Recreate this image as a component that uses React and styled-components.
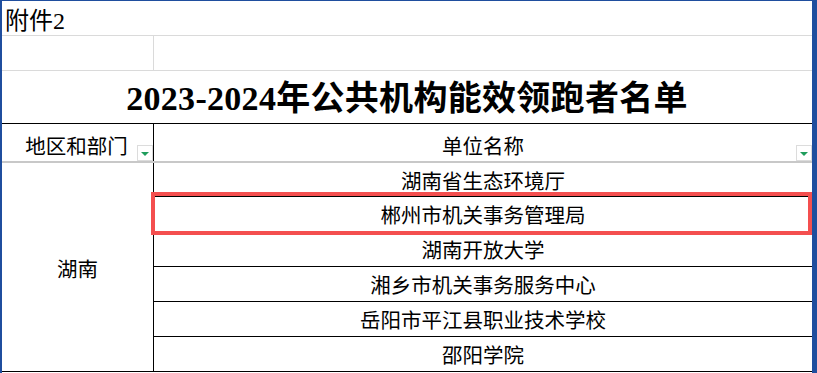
import React from 'react'
import styled, { createGlobalStyle } from 'styled-components'

const GlobalStyle = createGlobalStyle`
  html, body { margin: 0; padding: 0; background: #fff; }
  body { font-family: "Liberation Serif", "Noto Sans CJK SC", serif; color: #000; }
`

const Frame = styled.div`
  width: 817px;
  height: 373px;
  box-sizing: border-box;
  border-top: 1px solid #1f4e9e;
  border-left: 2px solid #1f4e9e;
  border-right: 5px solid #1f4e9e;
  overflow: hidden;
  font-size: 20.5px;
`

const Row = styled.div`
  display: flex;
  height: ${p => p.$h}px;
  box-sizing: border-box;
  border-bottom: ${p => p.$line || '1px solid #dadada'};
`

const Cell = styled.div`
  position: relative;
  display: flex;
  align-items: center;
  justify-content: ${p => p.$align || 'center'};
  box-sizing: border-box;
  width: ${p => (p.$w ? p.$w + 'px' : 'auto')};
  flex: ${p => (p.$w ? 'none' : '1')};
  border-right: ${p => p.$divider || 'none'};
  padding: ${p => p.$pad || '0'};
  font-size: ${p => p.$size || 'inherit'};
  white-space: nowrap;
`

const Title = styled.div`
  flex: 1;
  display: flex;
  align-items: center;
  justify-content: center;
  font-size: 34px;
  font-weight: bold;
  letter-spacing: 0.3px;
  padding-bottom: 3px;
`

const FilterButton = styled.span`
  position: absolute;
  right: 0;
  bottom: 0;
  width: 16px;
  height: 16px;
  box-sizing: border-box;
  border: 1px solid #dcdcdc;
  background: #fff;
  display: flex;
  align-items: center;
  justify-content: center;
  &::after {
    content: '';
    border-left: 4px solid transparent;
    border-right: 4px solid transparent;
    border-top: 4px solid #1f9d5c;
    margin-top: 1px;
  }
`

const DataBlock = styled.div`
  display: grid;
  grid-template-columns: 152px 1fr;
  grid-template-rows: 34px repeat(5, 35px);
`

const Region = styled.div`
  grid-row: 1 / span 6;
  display: flex;
  align-items: center;
  justify-content: center;
  border-right: 1px solid #000;
  border-bottom: 1px solid #000;
  padding-top: 1px;
`

const Unit = styled.div`
  position: relative;
  display: flex;
  align-items: center;
  justify-content: center;
  box-sizing: border-box;
  border-bottom: 1px solid #000;
`

const Selection = styled.div`
  position: absolute;
  top: -5px;
  bottom: -4px;
  left: -3px;
  right: 0;
  border: 4px solid #f44f4f;
  pointer-events: none;
`

const units = [
  '湖南省生态环境厅',
  '郴州市机关事务管理局',
  '湖南开放大学',
  '湘乡市机关事务服务中心',
  '岳阳市平江县职业技术学校',
  '邵阳学院',
]

export default function App() {
  return (
    <>
      <GlobalStyle />
      <Frame>
        <Row $h={35}>
          <Cell $align="flex-start" $pad="1px 0 0 3px" $size="24px">附件2</Cell>
        </Row>
        <Row $h={35}>
          <Cell $w={152} $divider="1px solid #dadada" />
          <Cell />
        </Row>
        <Row $h={53} $line="1px solid #000">
          <Title>2023-2024年公共机构能效领跑者名单</Title>
        </Row>
        <Row $h={39} $line="2px solid #c8c8c8">
          <Cell $w={152} $divider="1px solid #000" $pad="4px 2px 0 0">
            地区和部门
            <FilterButton />
          </Cell>
          <Cell $pad="4px 0 0 0">
            单位名称
            <FilterButton />
          </Cell>
        </Row>
        <DataBlock>
          <Region>湖南</Region>
          {units.map((u, i) => (
            <Unit key={u}>
              {u}
              {i === 1 && <Selection />}
            </Unit>
          ))}
        </DataBlock>
      </Frame>
    </>
  )
}
